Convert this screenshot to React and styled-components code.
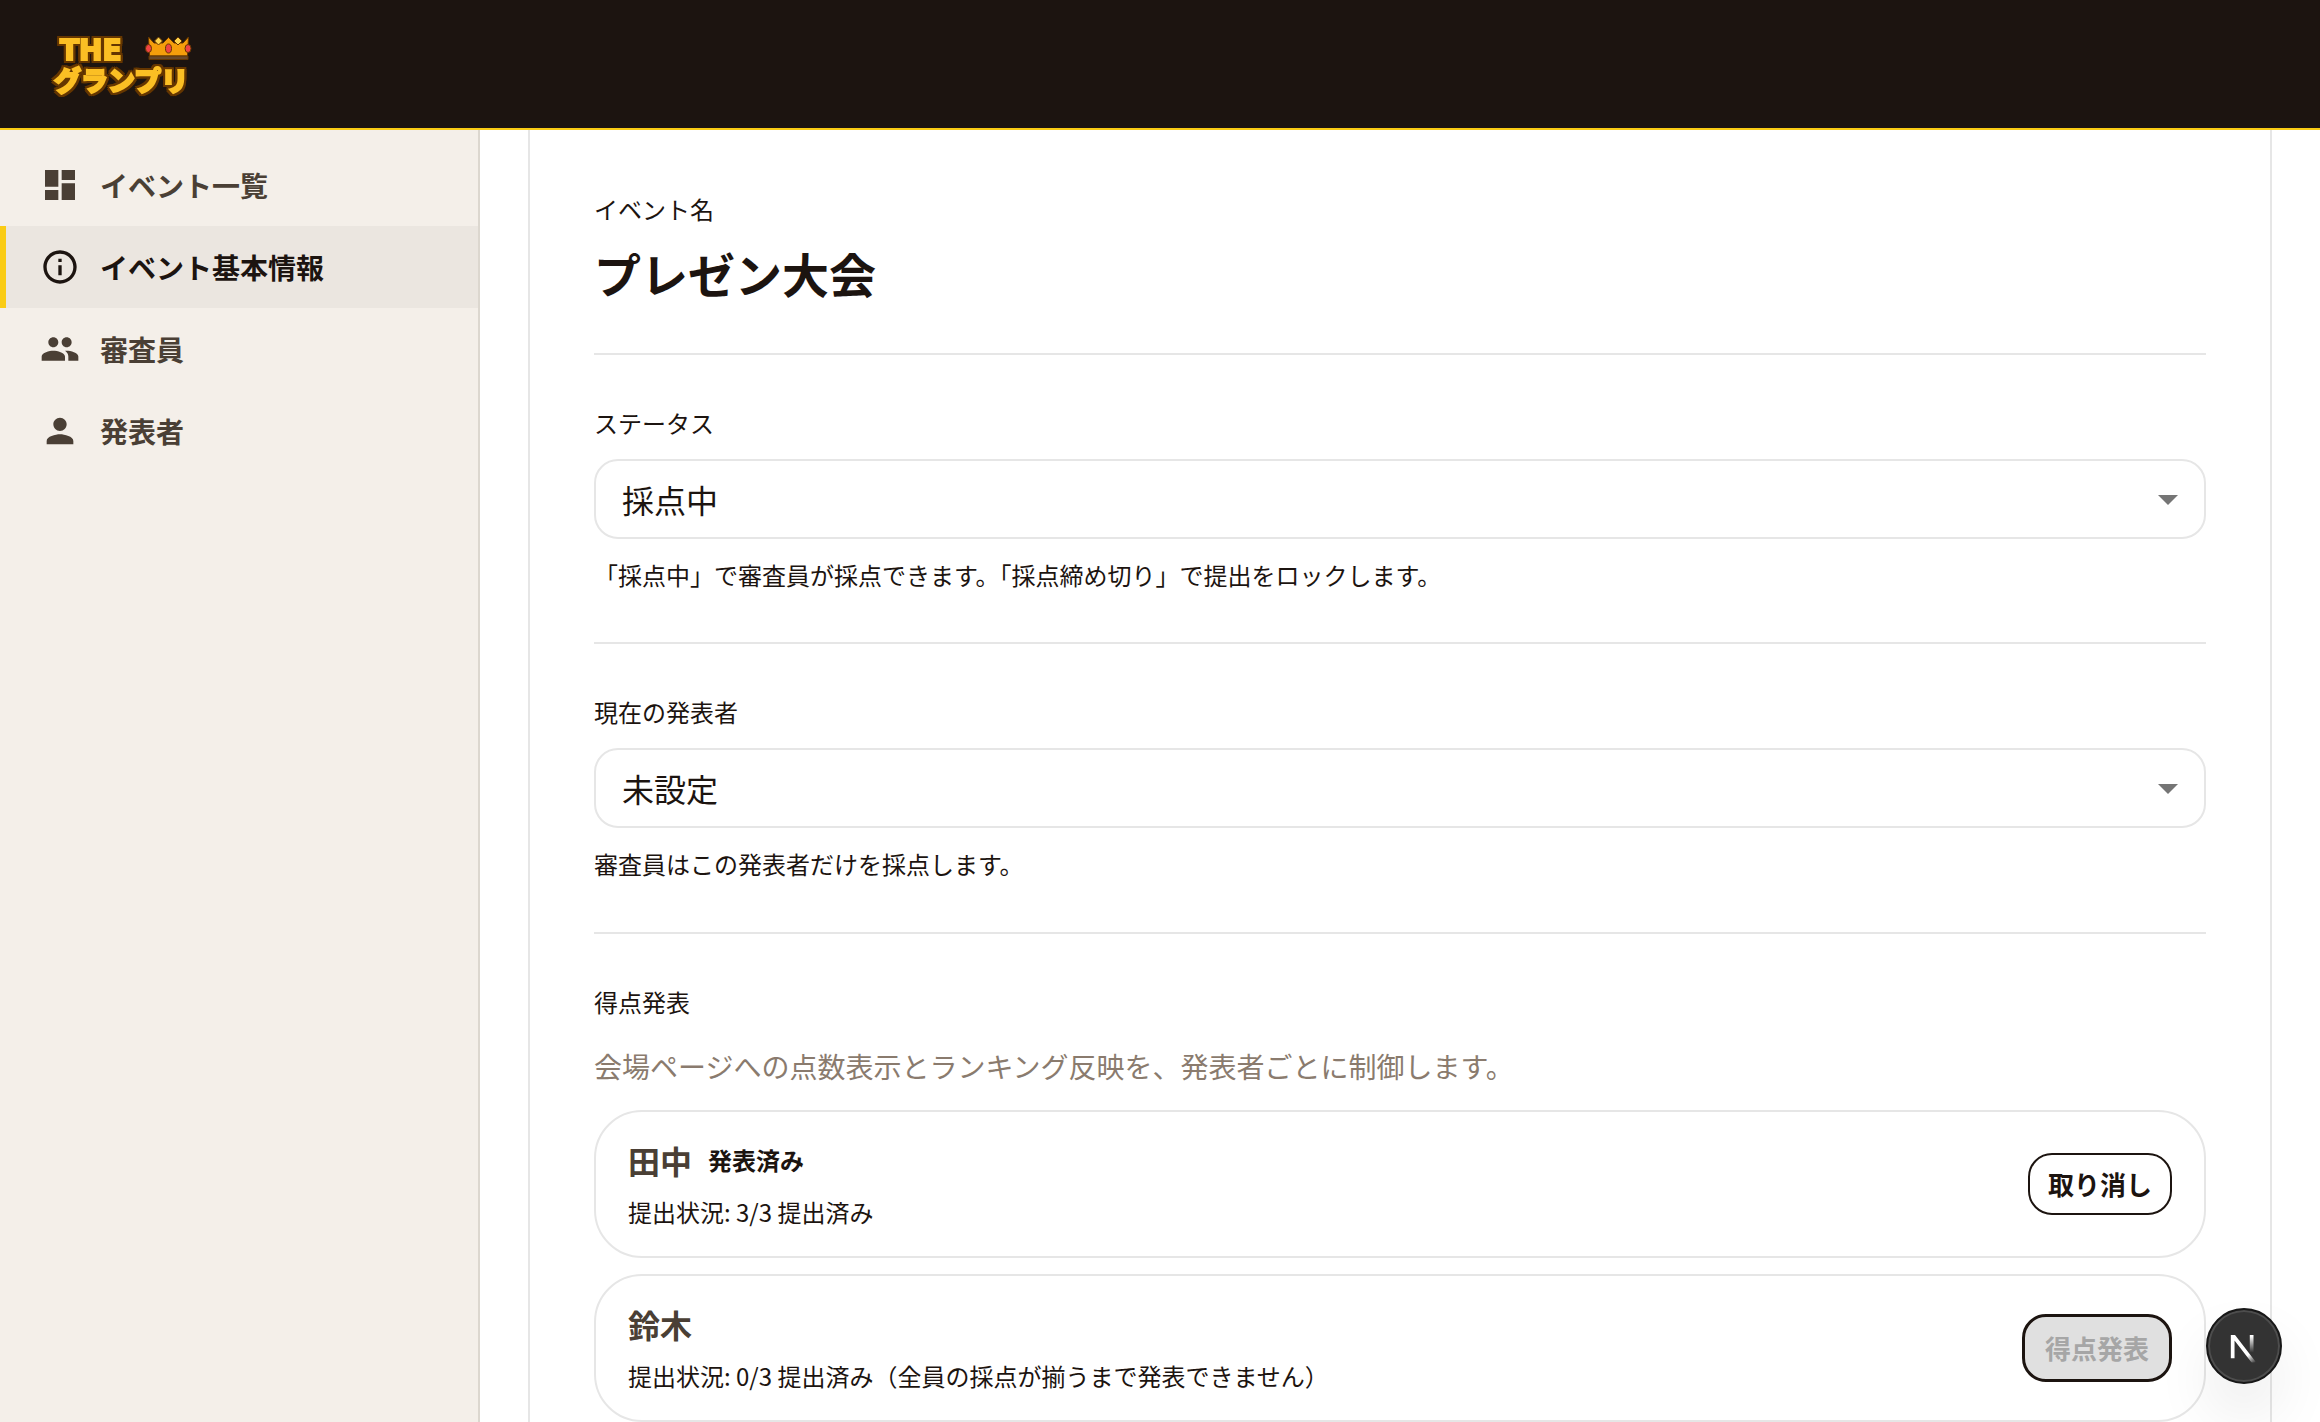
import React, { useState } from "react";
import styled, { createGlobalStyle, ThemeProvider } from "styled-components";
import {
  MdArrowDropDown,
  MdDashboard,
  MdInfoOutline,
  MdPeople,
  MdPerson,
} from "react-icons/md";

const theme = {
  colors: {
    ink: "#1c1410",
    brown: "#4a3f35",
    muted: "#8a7b6e",
    yellow: "#facc15",
    sidebar: "#f4efe9",
    active: "#ebe6e0",
    sidebarLine: "#dcd7cf",
    line: "#e6e6e6",
  },
};

const GlobalStyle = createGlobalStyle`
  * {
    box-sizing: border-box;
  }
  body {
    margin: 0;
    background: #fff;
    color: ${theme.colors.ink};
    font-family: "Noto Sans CJK JP", "Noto Sans", sans-serif;
  }
  h1, h2, p, ul {
    margin: 0;
    padding: 0;
  }
  button, select {
    font-family: inherit;
  }
`;

const Page = styled.div`
  display: flex;
  flex-direction: column;
  height: 100vh;
  overflow: hidden;
`;

const Header = styled.header`
  display: flex;
  align-items: center;
  flex: none;
  height: 130px;
  padding: 0 48px;
  background: ${(props) => props.theme.colors.ink};
  border-bottom: 2px solid ${(props) => props.theme.colors.yellow};
`;

const LogoLink = styled.a`
  display: block;
  line-height: 0;
`;

const LogoText = styled.text`
  fill: #fbbf24;
  stroke: #fbbf24;
  stroke-width: 2px;
  filter: drop-shadow(2px 0 0 #653600) drop-shadow(-2px 0 0 #653600)
    drop-shadow(0 2px 0 #653600) drop-shadow(0 -2px 0 #653600);
`;

const Body = styled.div`
  display: flex;
  flex: 1;
  min-height: 0;
`;

const Sidebar = styled.nav`
  flex: none;
  width: 480px;
  padding-top: 14px;
  background: ${(props) => props.theme.colors.sidebar};
  border-right: 2px solid ${(props) => props.theme.colors.sidebarLine};
`;

const NavList = styled.ul`
  list-style: none;
`;

const NavLink = styled.a`
  display: flex;
  align-items: center;
  gap: 20px;
  height: 82px;
  padding: 0 34px;
  border-left: 6px solid
    ${(props) => (props.$active ? props.theme.colors.yellow : "transparent")};
  background: ${(props) =>
    props.$active ? props.theme.colors.active : "transparent"};
  color: ${(props) =>
    props.$active ? props.theme.colors.ink : props.theme.colors.brown};
  font-size: 28px;
  font-weight: 700;
  text-decoration: none;

  svg {
    width: 40px;
    height: 40px;
  }
`;

const Main = styled.main`
  flex: 1;
  min-width: 0;
  padding: 0 48px;
  overflow: hidden;
`;

const Panel = styled.div`
  padding: 11px 64px 48px;
  border: solid ${(props) => props.theme.colors.line};
  border-width: 0 2px;
`;

const Section = styled.section`
  display: flex;
  flex-direction: column;
  gap: ${(props) => props.$gap || "16px"};
  padding: 48px 0;

  & + & {
    border-top: 2px solid ${(props) => props.theme.colors.line};
  }
`;

const Caption = styled.p`
  font-size: 24px;
  line-height: 1.66;
`;

const Title = styled.h1`
  margin-bottom: 4px;
  font-size: 47px;
  font-weight: 700;
  line-height: 56px;
`;

const SectionTitle = styled.h2`
  font-size: 24px;
  font-weight: 400;
  line-height: 1.66;
`;

const Lead = styled.p`
  color: ${(props) => props.theme.colors.muted};
  font-size: 28px;
  line-height: 40px;
`;

const SelectBox = styled.div`
  position: relative;

  svg {
    position: absolute;
    top: 16px;
    right: 14px;
    width: 48px;
    height: 48px;
    color: #757575;
    pointer-events: none;
  }
`;

const Select = styled.select`
  display: block;
  appearance: none;
  width: 100%;
  height: 80px;
  padding: 0 64px 0 26px;
  border: 2px solid ${(props) => props.theme.colors.line};
  border-radius: 24px;
  background: #fff;
  color: inherit;
  font-size: 32px;
`;

const PresenterList = styled.ul`
  display: flex;
  flex-direction: column;
  gap: 16px;
  list-style: none;
`;

const PresenterCard = styled.li`
  display: flex;
  align-items: center;
  justify-content: space-between;
  height: 148px;
  padding: 0 32px;
  border: 2px solid ${(props) => props.theme.colors.line};
  border-radius: 48px;
`;

const PresenterInfo = styled.div`
  display: flex;
  flex-direction: column;
  gap: 8px;
`;

const NameRow = styled.div`
  display: flex;
  align-items: center;
  gap: 16px;
`;

const Name = styled.span`
  color: ${(props) => props.theme.colors.brown};
  font-size: 32px;
  font-weight: 700;
  line-height: 48px;
`;

const Tag = styled.span`
  font-size: 24px;
  font-weight: 700;
  line-height: 40px;
`;

const OutlineButton = styled.button`
  height: 62px;
  padding: 0 18px;
  border: 2px solid ${(props) => props.theme.colors.ink};
  border-radius: 24px;
  background: #fff;
  color: ${(props) => props.theme.colors.ink};
  font-size: 26px;
  font-weight: 700;
`;

const SolidButton = styled(OutlineButton)`
  height: 68px;
  padding: 0 20px;
  border-width: 3px;
  background: ${(props) => props.theme.colors.yellow};

  &:disabled {
    background: #e0e0e0;
    color: #a6a6a6;
  }
`;

const DevBadge = styled.button`
  position: fixed;
  right: 38px;
  bottom: 38px;
  width: 76px;
  height: 76px;
  padding: 0;
  border: 2px solid #171717;
  border-radius: 50%;
  background: #333;
  box-shadow: inset 0 0 0 2px #4d4d4d, 0 32px 64px -8px rgba(0, 0, 0, 0.12);

  svg {
    display: block;
    width: 72px;
    height: 72px;
  }
`;

const Logo = () => (
  <svg width="148" height="72" viewBox="48 28 148 72" role="img" aria-label="THE グランプリ">
    <LogoText>
      <tspan x="60" y="60" fontFamily="DejaVu Sans" fontWeight="700" fontSize="28">
        THE
      </tspan>
      <tspan x="54" y="91" fontFamily="Noto Sans CJK JP" fontWeight="900" fontSize="27">
        グランプリ
      </tspan>
    </LogoText>
    <g stroke="#653600" strokeWidth="1" strokeLinejoin="round">
      <path
        d="M148.500 37 L154 43 H163 L168.500 37.500 L174 43 H183 L188.500 37 L187.500 56 H149.500 Z"
        fill="#f59e0b"
      />
      <path d="M149 56 H188 V59.500 H149 Z" fill="#6b4a2a" />
      <path d="M158.500 37 L162.500 41 L158.500 45 L154.500 41 Z" fill="#fcd34d" />
      <path d="M178 37 L182 41 L178 45 L174 41 Z" fill="#fcd34d" />
      <ellipse cx="168.500" cy="48.500" rx="3" ry="4.500" fill="#ef4444" />
      <ellipse cx="148.500" cy="48.500" rx="3" ry="4" fill="#ef4444" />
      <ellipse cx="188" cy="48.500" rx="3" ry="4" fill="#ef4444" />
    </g>
  </svg>
);

const NextMark = () => (
  <svg viewBox="1 1 36 36" fill="none" aria-hidden="true">
    <defs>
      <clipPath id="mark">
        <rect x="1" y="1" width="13" height="13.700" />
      </clipPath>
      <linearGradient id="diagonal" gradientUnits="userSpaceOnUse" x1="9.960" y1="11.060" x2="13.300" y2="15.200">
        <stop stopColor="#fff" />
        <stop offset="1" stopColor="#fff" stopOpacity="0" />
      </linearGradient>
      <linearGradient id="bar" gradientUnits="userSpaceOnUse" x1="11.820" y1="1.500" x2="11.800" y2="9.800">
        <stop stopColor="#fff" />
        <stop offset="1" stopColor="#fff" stopOpacity="0" />
      </linearGradient>
    </defs>
    <g transform="translate(11 12.500)" strokeWidth="1.860" clipPath="url(#mark)">
      <path d="M13.300 15.200 L2.340 1 V12.600" stroke="url(#diagonal)" />
      <path d="M11.825 1 V13.100" stroke="url(#bar)" />
    </g>
  </svg>
);

const navItems = [
  { label: "イベント一覧", icon: MdDashboard },
  { label: "イベント基本情報", icon: MdInfoOutline, active: true },
  { label: "審査員", icon: MdPeople },
  { label: "発表者", icon: MdPerson },
];

const presenters = [
  { name: "田中", submitted: 3, announced: true },
  { name: "鈴木", submitted: 0, announced: false },
];

const SelectField = ({ id, label, options, help }) => {
  const [value, setValue] = useState(options[0]);

  return (
    <Section>
      <Caption as="label" htmlFor={id}>
        {label}
      </Caption>
      <SelectBox>
        <Select
          id={id}
          value={value}
          aria-describedby={`${id}-help`}
          onChange={(e) => setValue(e.target.value)}
        >
          {options.map((option) => (
            <option key={option}>{option}</option>
          ))}
        </Select>
        <MdArrowDropDown />
      </SelectBox>
      <Caption id={`${id}-help`}>{help}</Caption>
    </Section>
  );
};

const Presenter = ({ name, submitted, announced }) => (
  <PresenterCard>
    <PresenterInfo>
      <NameRow>
        <Name>{name}</Name>
        {announced && <Tag>発表済み</Tag>}
      </NameRow>
      <Caption>
        {`提出状況: ${submitted}/3 提出済み`}
        {submitted < 3 && "（全員の採点が揃うまで発表できません）"}
      </Caption>
    </PresenterInfo>
    {announced ? (
      <OutlineButton type="button">取り消し</OutlineButton>
    ) : (
      <SolidButton type="button" disabled={submitted < 3}>
        得点発表
      </SolidButton>
    )}
  </PresenterCard>
);

const App = () => {
  return (
    <ThemeProvider theme={theme}>
      <GlobalStyle />
      <Page>
        <Header>
          <LogoLink href="#">
            <Logo />
          </LogoLink>
        </Header>
        <Body>
          <Sidebar>
            <NavList>
              {navItems.map(({ label, icon: Icon, active }) => (
                <li key={label}>
                  <NavLink href="#" $active={active}>
                    <Icon />
                    {label}
                  </NavLink>
                </li>
              ))}
            </NavList>
          </Sidebar>
          <Main>
            <Panel>
              <Section>
                <Caption>イベント名</Caption>
                <Title>プレゼン大会</Title>
              </Section>
              <SelectField
                id="status"
                label="ステータス"
                options={["採点中", "採点締め切り"]}
                help="「採点中」で審査員が採点できます。「採点締め切り」で提出をロックします。"
              />
              <SelectField
                id="presenter"
                label="現在の発表者"
                options={["未設定", "田中", "鈴木"]}
                help="審査員はこの発表者だけを採点します。"
              />
              <Section $gap="24px">
                <SectionTitle>得点発表</SectionTitle>
                <Lead>
                  会場ページへの点数表示とランキング反映を、発表者ごとに制御します。
                </Lead>
                <PresenterList>
                  {presenters.map((presenter) => (
                    <Presenter key={presenter.name} {...presenter} />
                  ))}
                </PresenterList>
              </Section>
            </Panel>
          </Main>
        </Body>
        <DevBadge type="button" aria-label="Next.js">
          <NextMark />
        </DevBadge>
      </Page>
    </ThemeProvider>
  );
};

export default App;
